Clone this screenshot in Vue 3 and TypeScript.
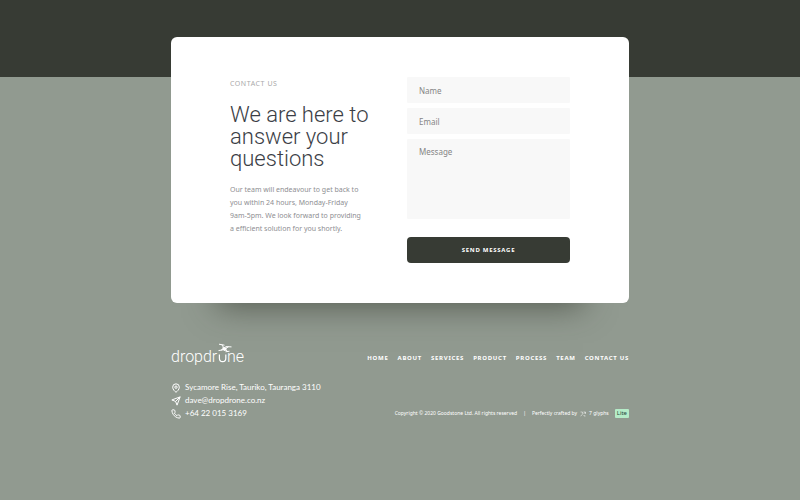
<script setup lang="ts">
import { ref } from 'vue'

const name = ref('')
const email = ref('')
const message = ref('')

const links: string[] = ['Home', 'About', 'Services', 'Product', 'Process', 'Team', 'Contact us']
</script>

<template>
  <div class="page">
    <main class="wrap card">
      <section class="intro">
        <p class="eyebrow">CONTACT US</p>
        <h1>We are here to<br />answer your<br />questions</h1>
        <p class="lead">
          Our team will endeavour to get back to<br />you within 24 hours, Monday-Friday<br />9am-5pm. We look forward to
          providing<br />a efficient solution for you shortly.
        </p>
      </section>
      <form class="form" @submit.prevent>
        <input v-model="name" type="text" placeholder="Name" aria-label="Name" />
        <input v-model="email" type="email" placeholder="Email" aria-label="Email" />
        <textarea v-model="message" placeholder="Message" aria-label="Message"></textarea>
        <button type="submit">SEND MESSAGE</button>
      </form>
    </main>

    <footer class="wrap footer">
      <div class="top">
        <a class="logo" href="#" aria-label="dropdrone">
          <svg viewBox="0 0 74 26" width="74" height="26">
            <g class="word">
              <text x="0" y="19">dropdr</text>
              <text x="56" y="19">ne</text>
            </g>
            <path class="ring" d="M48.400 11.500v3.700c0 2.300 1.200 3.400 3.200 3.400s3.200-1.100 3.200-3.400v-3.700" />
            <path class="drone" d="M48 1.200l5.500 1M54.500 3.600l6 .3M47.500 7.600l4.500-.8M50.800 1.700l1.700 2.600M57.500 3.800l-2.500 1.400M54.500 7l2 1.200M54.500 8.800l4-.6M50 7.200l2.400-1.600" />
            <path class="body" d="M51.500 4.200l2.600-.2 1.700 1.600-.6 1.800-2 .6-1.700-1.400z" />
          </svg>
        </a>
        <nav>
          <a v-for="link in links" :key="link" href="#">{{ link.toUpperCase() }}</a>
        </nav>
      </div>
      <div class="bottom">
        <address>
          <a href="#">
            <svg viewBox="0 0 24 24"><path d="M12 22.500c-2-2-8-6.500-8-12.500a8 8 0 0 1 16 0c0 6-6 10.500-8 12.500z" /><circle cx="12" cy="10" r="2.800" /></svg>
            Sycamore Rise, Tauriko, Tauranga 3110
          </a>
          <a href="mailto:dave@dropdrone.co.nz">
            <svg viewBox="0 0 24 24"><path d="M22 2L2 9.500l9 3.500 3.500 9zM22 2L11 13" /></svg>
            dave@dropdrone.co.nz
          </a>
          <a href="tel:+64220153169">
            <svg viewBox="0 0 24 24"><path d="M22 16.900v3a2 2 0 0 1-2.200 2 19.800 19.800 0 0 1-8.600-3.100 19.500 19.500 0 0 1-6-6A19.800 19.800 0 0 1 2.100 4.200 2 2 0 0 1 4.100 2h3a2 2 0 0 1 2 1.700c.1 1 .4 1.900.7 2.800a2 2 0 0 1-.5 2.100L8.100 9.900a16 16 0 0 0 6 6l1.300-1.300a2 2 0 0 1 2.100-.4c.9.300 1.800.6 2.800.7a2 2 0 0 1 1.700 2z" /></svg>
            +64 22 015 3169
          </a>
        </address>
        <div class="legal">
          <span>Copyright © 2020 Goodstone Ltd. All rights reserved</span>
          <span class="sep">|</span>
          <span class="credit">
            Perfectly crafted by
            <a href="#" class="glyphs">
              <svg viewBox="0 0 12 12"><path d="M1 2h4M1 10c3-1 4-3 4-8M7 2h4v4M11 2L7 6M8 8v2h3" /></svg>
              7 glyphs
            </a>
          </span>
          <span class="lite">Lite</span>
        </div>
      </div>
    </footer>
  </div>
</template>

<style>
body {
  background: #919a90;
}
</style>

<style scoped>
.page {
  box-sizing: border-box;
  min-height: 100vh;
  padding: 37px 0 40px;
  background: linear-gradient(#373b34 77px, #919a90 77px);
  font-family: 'Noto Sans', 'Open Sans', sans-serif;
  color: #fff;
}
.wrap {
  box-sizing: border-box;
  width: calc(100% - 48px);
  max-width: 458px;
  margin: 0 auto;
}
.card {
  display: grid;
  grid-template-columns: 1fr 163px;
  gap: 12px;
  padding: 40px 59px;
  border-radius: 6px;
  background: #fff;
  box-shadow: 0 50px 30px -46px rgba(50, 54, 44, 0.6);
}
.eyebrow {
  margin: 2px 0 0;
  font-size: 7px;
  line-height: 10px;
  letter-spacing: 0.08em;
  color: #aaa;
}
h1 {
  margin: 15px 0 0;
  font-family: Roboto, sans-serif;
  font-weight: 300;
  font-size: 22px;
  line-height: 22px;
  white-space: nowrap;
  color: #3b3e46;
}
.lead {
  margin: 13px 0 0;
  font-size: 7px;
  line-height: 13px;
  white-space: nowrap;
  color: #8e8e92;
}
.form {
  display: flex;
  flex-direction: column;
  gap: 5px;
}
input,
textarea {
  box-sizing: border-box;
  width: 100%;
  height: 26px;
  margin: 0;
  padding: 0 12px;
  border: 0;
  border-radius: 1px;
  background: #f8f8f8;
  font: 8px/12px 'Noto Sans', sans-serif;
  color: #555;
}
textarea {
  display: block;
  height: 80px;
  padding: 7px 12px;
  resize: none;
}
::placeholder {
  color: #858585;
  opacity: 1;
}
button {
  height: 26px;
  margin-top: 13px;
  padding: 0;
  border: 0;
  border-radius: 4px;
  background: #373b34;
  color: #fff;
  font: 700 6px/10px 'Noto Sans', sans-serif;
  letter-spacing: 0.12em;
}
a {
  color: inherit;
  text-decoration: none;
}
.footer {
  padding-top: 40px;
}
.top,
.bottom {
  display: flex;
  justify-content: space-between;
}
.logo svg {
  display: block;
}
.word {
  fill: #fff;
  font-family: Roboto, sans-serif;
  font-size: 16px;
  font-weight: 300;
}
.ring {
  fill: none;
  stroke: #fff;
  stroke-width: 1.2;
}
.drone {
  fill: none;
  stroke: #fff;
  stroke-width: 1;
}
.body {
  fill: #fff;
}
nav {
  display: flex;
  gap: 9px;
  padding-top: 10px;
  font-size: 6px;
  font-weight: 700;
  line-height: 10px;
  letter-spacing: 0.12em;
}
.bottom {
  align-items: flex-end;
  margin-top: 12px;
}
address {
  font-family: Lato, sans-serif;
  font-size: 8px;
  font-style: normal;
  line-height: 13px;
}
address a {
  display: flex;
  align-items: center;
  gap: 4px;
}
address svg {
  width: 10px;
  height: 10px;
  fill: none;
  stroke: #fff;
  stroke-width: 2.4;
  stroke-linejoin: round;
}
.legal {
  display: flex;
  align-items: center;
  gap: 6px;
  padding-bottom: 2px;
  font-size: 5px;
  line-height: 9px;
  white-space: nowrap;
}
.credit,
.glyphs {
  display: flex;
  align-items: center;
  gap: 3px;
}
.glyphs svg {
  width: 6px;
  height: 6px;
  fill: none;
  stroke: #fff;
}
.lite {
  padding: 0 2px;
  border-radius: 1px;
  background: #b5ecc8;
  color: #28483a;
  font-size: 6px;
}
</style>
